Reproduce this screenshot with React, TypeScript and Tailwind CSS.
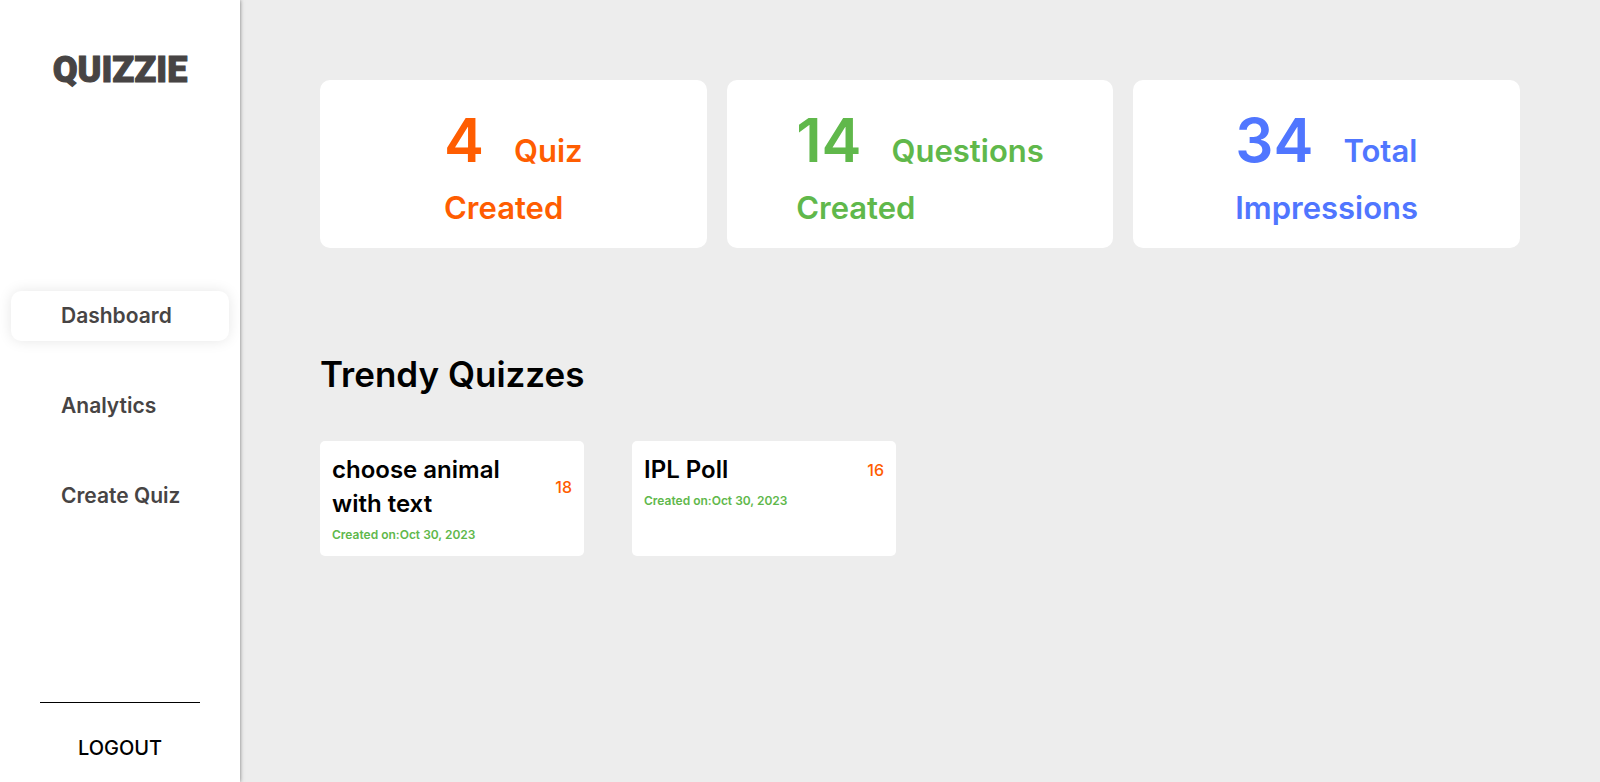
const stats = [
  { value: 4, first: "Quiz", second: "Created", color: "text-[#ff5d01]" },
  { value: 14, first: "Questions", second: "Created", color: "text-[#60b84b]" },
  { value: 34, first: "Total", second: "Impressions", color: "text-[#5076ff]" },
];

const navItems = ["Dashboard", "Analytics", "Create Quiz"];

const quizzes = [
  { title: "choose animal with text", views: 18, created: "Oct 30, 2023" },
  { title: "IPL Poll", views: 16, created: "Oct 30, 2023" },
];

function Sidebar() {
  return (
    <aside className="z-10 flex w-60 shrink-0 flex-col items-center justify-between bg-white pt-12 pb-4 shadow-[0_0_4px_rgba(0,0,0,0.5)]">
      <div className="pb-[18px] font-['Roboto',sans-serif] text-4xl leading-[44px] font-black text-[#474444] [-webkit-text-stroke:1px_#474444]">
        QUIZZIE
      </div>
      <nav className="flex w-full flex-col gap-10 px-[11px]">
        {navItems.map((item, index) => (
          <button
            key={item}
            type="button"
            aria-current={index === 0 ? "page" : undefined}
            className={
              index === 0
                ? "h-[50px] rounded-[10px] bg-white pl-[50px] text-left text-[21px] font-semibold text-[#474444] shadow-[0_0_14px_rgba(0,0,0,0.1)]"
                : "h-[50px] rounded-[10px] pl-[50px] text-left text-[21px] font-semibold text-[#474444]"
            }
          >
            {item}
          </button>
        ))}
      </nav>
      <div className="flex w-40 flex-col items-center border-t border-black pt-7">
        <button type="button" className="text-xl leading-[35px] font-medium text-black">
          LOGOUT
        </button>
      </div>
    </aside>
  );
}

export default function App() {
  return (
    <div className="flex min-h-screen bg-[#ededed] font-['Inter',sans-serif] text-black">
      <Sidebar />
      <main className="flex-1 px-20 pt-20">
        <section className="grid grid-cols-3 gap-5">
          {stats.map((stat) => (
            <div
              key={stat.second + stat.value}
              className="flex h-[168px] items-center justify-center rounded-[10px] bg-white pt-2"
            >
              <p className={`text-[31px] font-semibold ${stat.color}`}>
                <span className="flex items-baseline gap-[30px]">
                  <span className="text-6xl leading-[80px]">{stat.value}</span>
                  {stat.first}
                </span>
                <span className="block leading-[56px]">{stat.second}</span>
              </p>
            </div>
          ))}
        </section>
        <h1 className="mt-[100px] text-[35px] leading-[52px] font-semibold">Trendy Quizzes</h1>
        <section className="mt-[41px] flex flex-wrap gap-12">
          {quizzes.map((quiz) => (
            <article key={quiz.title} className="w-[264px] rounded-[5px] bg-white p-3">
              <div className="flex items-center justify-between">
                <h2 className="w-[190px] text-2xl leading-[34px] font-semibold">{quiz.title}</h2>
                <span className="font-medium text-[#ff5d01]">{quiz.views}</span>
              </div>
              <p className="mt-1 text-xs leading-[19px] font-semibold text-[#60b84b]">
                Created on:{quiz.created}
              </p>
            </article>
          ))}
        </section>
      </main>
    </div>
  );
}
